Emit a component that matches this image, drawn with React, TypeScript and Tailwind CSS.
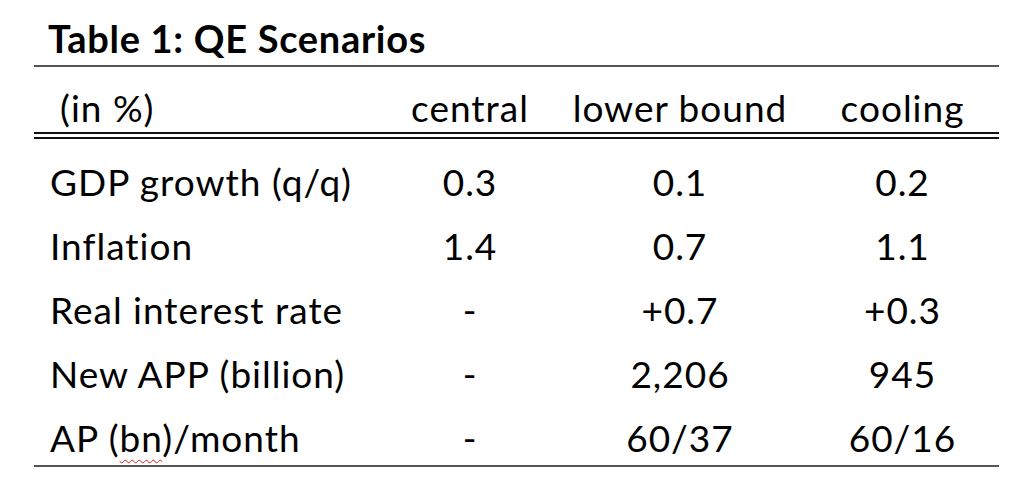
const rows = [
  { label: 'GDP growth (q/q)', central: '0.3', lower: '0.1', cooling: '0.2' },
  { label: 'Inflation', central: '1.4', lower: '0.7', cooling: '1.1' },
  { label: 'Real interest rate', central: '-', lower: '+0.7', cooling: '+0.3' },
  { label: 'New APP (billion)', central: '-', lower: '2,206', cooling: '945' },
]

export default function App() {
  return (
    <div className="w-[1024px] h-[499px] bg-white text-black font-['Lato',sans-serif] overflow-hidden">
      <div className="ml-[34px] w-[965px] pt-[16px]">
        {/* title */}
        <h1 className="pl-[14px] text-[38px] font-bold leading-[44px] tracking-[0.7px] mb-[5px]">Table 1: QE Scenarios</h1>
        <div className="h-[2px] bg-[#555]" />

        {/* header row */}
        <div className="grid grid-cols-[366px_140px_280px_165px] text-[37px] leading-[44px] tracking-[1px] pt-[19px] pb-[2px]">
          <div className="pl-[26px]">(in %)</div>
          <div className="text-center">central</div>
          <div className="text-center">lower bound</div>
          <div className="text-center">cooling</div>
        </div>
        <div className="h-[2px] bg-[#111]" />
        <div className="h-[2px] mt-[3px] bg-[#111]" />

        {/* body */}
        <div className="flex flex-col gap-[10px] pt-[16px] text-[37px] leading-[54px] tracking-[1px]">
          {rows.map((r) => (
            <div key={r.label} className="grid grid-cols-[366px_140px_280px_165px]">
              <div className="pl-[16px]">{r.label}</div>
              <div className="text-center">{r.central}</div>
              <div className="text-center">{r.lower}</div>
              <div className="text-center">{r.cooling}</div>
            </div>
          ))}
          <div className="grid grid-cols-[366px_140px_280px_165px]">
            <div className="pl-[16px]">
              AP (<span className="underline decoration-wavy decoration-[#d22] decoration-1 underline-offset-[7px]">bn</span>)/month
            </div>
            <div className="text-center">-</div>
            <div className="text-center">60/37</div>
            <div className="text-center">60/16</div>
          </div>
        </div>
        <div className="h-[2px] bg-[#555]" />
      </div>
    </div>
  )
}
